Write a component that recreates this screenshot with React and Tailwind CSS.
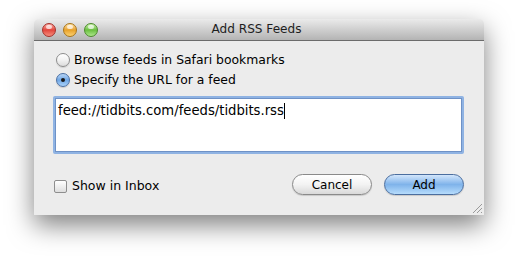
import React from "react";

const font = { fontFamily: '"DejaVu Sans", "Liberation Sans", sans-serif' };

function Light({ from, mid, to, ring }) {
  return (
    <div
      className={`w-[14px] h-[14px] rounded-full border ${ring} relative overflow-hidden bg-gradient-to-b ${from} ${mid} ${to}`}
    >
      <div className="absolute left-[3px] top-[1px] w-[6px] h-[4px] rounded-full bg-white/70" />
    </div>
  );
}

function Radio({ checked }) {
  if (checked) {
    return (
      <div className="w-[14px] h-[14px] rounded-full border border-[#4a6fa3] bg-gradient-to-b from-[#b9d6f6] via-[#6fa6e4] to-[#a9d2fa] flex items-center justify-center shadow-[0_1px_1px_rgba(0,0,0,0.15)]">
        <div className="w-[4px] h-[4px] rounded-full bg-[#1a1a1a]" />
      </div>
    );
  }
  return (
    <div className="w-[14px] h-[14px] rounded-full border border-[#8d8d8d] bg-gradient-to-b from-[#ffffff] via-[#f2f2f2] to-[#dcdcdc] shadow-[0_1px_1px_rgba(0,0,0,0.12)]" />
  );
}

export default function App() {
  return (
    <div className="w-[517px] h-[263px] bg-white pl-[34px] pt-[19px]" style={font}>
      <div className="w-[450px] h-[196px] rounded-t-[5px] bg-[#ececec] shadow-[0_10px_26px_rgba(0,0,0,0.5)] flex flex-col relative">
        {/* title bar */}
        <div className="h-[22px] rounded-t-[5px] bg-gradient-to-b from-[#ebebeb] to-[#b4b4b4] border-b border-[#6b6b6b] flex items-center relative shrink-0">
          <div className="flex items-center gap-[7px] pl-[8px]">
            <Light from="from-[#f9a6a0]" mid="via-[#e2453d]" to="to-[#f58a7c]" ring="border-[#a4302a]" />
            <Light from="from-[#fde0a0]" mid="via-[#e8a227]" to="to-[#fbd06d]" ring="border-[#a87418]" />
            <Light from="from-[#c8f0a8]" mid="via-[#6abf3e]" to="to-[#ace78a]" ring="border-[#4c8a2c]" />
          </div>
          <div className="flex-1 text-center text-[12.1px] text-[#1e1e1e] pr-[69px] leading-none">
            Add RSS Feeds
          </div>
        </div>
        {/* content */}
        <div className="flex-1 flex flex-col pt-[9px] pl-[22px] pr-[20px]">
          <div className="h-[20px] flex items-center gap-[4px] text-[12.4px] text-black">
            <Radio checked={false} />
            <span>Browse feeds in Safari bookmarks</span>
          </div>
          <div className="h-[20px] flex items-center gap-[4px] text-[12.4px] text-black">
            <Radio checked={true} />
            <span>Specify the URL for a feed</span>
          </div>
          <div className="mt-[6px] -ml-[3px] w-[411px] h-[58px] rounded-[2px] bg-[#8fb3e3] p-[2px]">
            <div className="w-full h-full bg-white border border-[#6f92c6] flex items-start pl-[2px] pt-[4px]">
              <span className="text-[13.2px] leading-[16px] text-black">feed://tidbits.com/feeds/tidbits.rss</span>
              <span className="w-[1px] h-[16px] bg-black" />
            </div>
          </div>
          <div className="mt-[20px] flex items-center">
            <div className="flex items-center gap-[5px] -ml-[2px] mt-[3px]">
              <div className="w-[13px] h-[13px] rounded-[2px] border border-[#8e8e8e] bg-gradient-to-b from-[#ffffff] to-[#dedede]" />
              <span className="text-[12.5px] text-black">Show in Inbox</span>
            </div>
            <div className="flex-1" />
            <div className="w-[80px] h-[21px] rounded-full border border-[#8a8a8a] bg-gradient-to-b from-[#ffffff] via-[#f3f3f3] to-[#d9d9d9] flex items-center justify-center text-[12px] text-black shadow-[0_1px_1px_rgba(0,0,0,0.15)]">
              Cancel
            </div>
            <div className="w-[80px] h-[21px] ml-[12px] rounded-full border border-[#4b6e9f] bg-gradient-to-b from-[#d3e6fb] via-[#7fb3ea] to-[#b6dcfc] flex items-center justify-center text-[12px] text-black shadow-[0_1px_1px_rgba(0,0,0,0.15)]">
              Add
            </div>
          </div>
        </div>
        {/* resize grip */}
        <svg className="absolute right-[1px] bottom-[1px]" width="11" height="11" viewBox="0 0 11 11">
          <line x1="10" y1="1" x2="1" y2="10" stroke="#9a9a9a" strokeWidth="1" />
          <line x1="10" y1="5" x2="5" y2="10" stroke="#9a9a9a" strokeWidth="1" />
          <line x1="10" y1="9" x2="9" y2="10" stroke="#9a9a9a" strokeWidth="1" />
        </svg>
      </div>
    </div>
  );
}
